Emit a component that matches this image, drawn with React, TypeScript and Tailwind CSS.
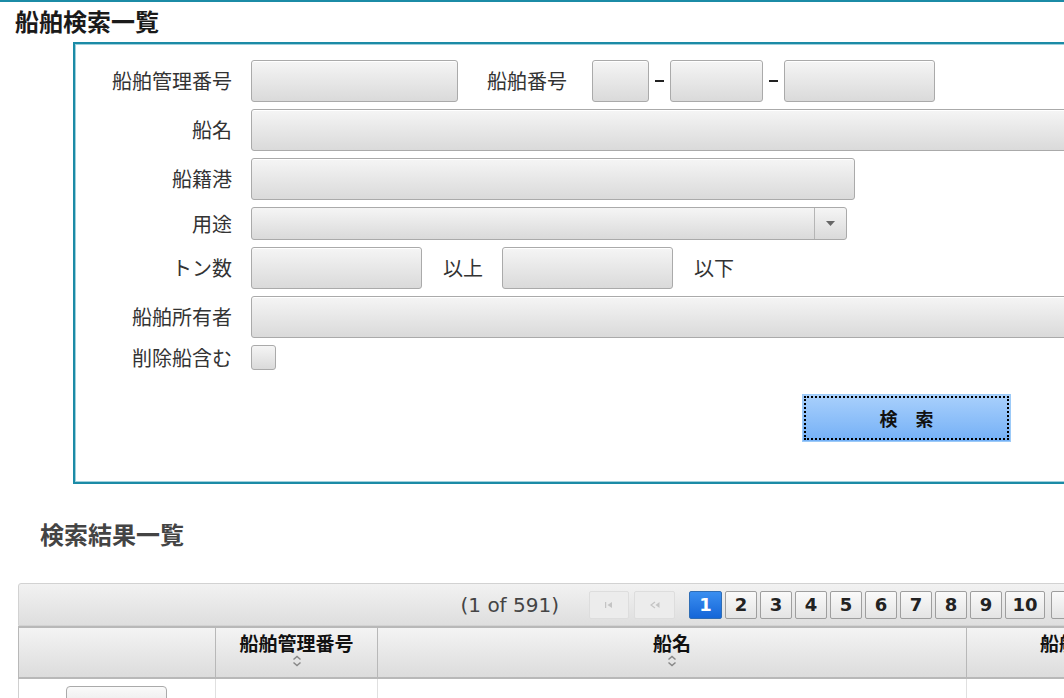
import React from 'react';

const jp = "font-['Noto_Sans_CJK_JP',sans-serif]";
const inputCls =
  'h-[42px] rounded-[3px] border border-[#aaaaaa] bg-gradient-to-b from-[#f5f5f5] to-[#dadada] shadow-[inset_0_1px_0_#ffffff]';

function Label({ children }: { children: React.ReactNode }) {
  return (
    <div className="w-[157px] shrink-0 text-right text-[20px] leading-[24px] text-[#333333]">
      {children}
    </div>
  );
}

function Dash() {
  return (
    <div className="flex w-[21px] justify-center">
      <div className="h-[2px] w-[9px] bg-[#222222]" />
    </div>
  );
}

// 並び替えアイコン
function SortIcon() {
  return (
    <svg width="10" height="12" viewBox="0 0 10 12" className="mx-auto mt-[1px]">
      <path d="M1.5 4.5 L5 1.5 L8.5 4.5" fill="none" stroke="#888" strokeWidth="1.5" />
      <path d="M1.5 7.5 L5 10.5 L8.5 7.5" fill="none" stroke="#888" strokeWidth="1.5" />
    </svg>
  );
}

function PagerIcon({ kind, color }: { kind: 'first' | 'prev' | 'next' | 'last'; color: string }) {
  return (
    <svg width="12" height="8" viewBox="0 0 12 8">
      {kind === 'first' && (
        <>
          <rect x="2" y="1" width="1.2" height="6" fill={color} />
          <path d="M9 1 L4.5 4 L9 7 Z" fill={color} />
        </>
      )}
      {kind === 'prev' && (
        <>
          <path d="M6 1 L2 4 L6 7" fill="none" stroke={color} strokeWidth="1.2" />
          <path d="M10.5 1 L6.5 4 L10.5 7 Z" fill={color} />
        </>
      )}
      {kind === 'next' && (
        <>
          <path d="M6 1 L10 4 L6 7" fill="none" stroke={color} strokeWidth="1.2" />
          <path d="M1.5 1 L5.5 4 L1.5 7 Z" fill={color} />
        </>
      )}
      {kind === 'last' && (
        <>
          <rect x="8.8" y="1" width="1.2" height="6" fill={color} />
          <path d="M3 1 L7.5 4 L3 7 Z" fill={color} />
        </>
      )}
    </svg>
  );
}

export default function App() {
  const pages = [1, 2, 3, 4, 5, 6, 7, 8, 9, 10];

  return (
    <div className={`h-[698px] w-[1064px] overflow-hidden border-t-2 border-[#1b8ba6] bg-white ${jp}`}>
      <h1 className="pl-[15px] pt-[4px] text-[24px] font-bold leading-[30px] text-[#1a1a1a]">船舶検索一覧</h1>

      {/* 検索条件 */}
      <div className="ml-[73px] mt-[6px] h-[442px] w-[1100px] border-2 border-[#1b8ba6] shadow-[inset_0_0_0_1px_#9fd0dc]">
        <div className="flex flex-col gap-[7px] pt-[16px]">
          <div className="flex items-center">
            <Label>船舶管理番号</Label>
            <div className={`ml-[19px] w-[207px] ${inputCls}`} />
            <div className="ml-[29px] w-[105px] text-[20px] text-[#333333]">船舶番号</div>
            <div className={`w-[57px] ${inputCls}`} />
            <Dash />
            <div className={`w-[93px] ${inputCls}`} />
            <Dash />
            <div className={`w-[151px] ${inputCls}`} />
          </div>
          <div className="flex items-center">
            <Label>船名</Label>
            <div className={`ml-[19px] w-[900px] ${inputCls}`} />
          </div>
          <div className="flex items-center">
            <Label>船籍港</Label>
            <div className={`ml-[19px] w-[604px] ${inputCls}`} />
          </div>
          <div className="flex items-center">
            <Label>用途</Label>
            <div className="ml-[19px] flex h-[33px] w-[596px] rounded-[3px] border border-[#aaaaaa] bg-gradient-to-b from-[#f5f5f5] to-[#dadada]">
              <div className="flex-1" />
              <div className="flex w-[32px] items-center justify-center border-l border-[#b5b5b5]">
                <svg width="9" height="5" viewBox="0 0 9 5">
                  <path d="M0 0 H9 L4.5 5 Z" fill="#666" />
                </svg>
              </div>
            </div>
          </div>
          <div className="flex items-center">
            <Label>トン数</Label>
            <div className={`ml-[19px] w-[171px] ${inputCls}`} />
            <div className="w-[80px] pl-[21px] text-[20px] text-[#333333]">以上</div>
            <div className={`w-[171px] ${inputCls}`} />
            <div className="pl-[21px] text-[20px] text-[#333333]">以下</div>
          </div>
          <div className="flex items-center">
            <Label>船舶所有者</Label>
            <div className={`ml-[19px] w-[900px] ${inputCls}`} />
          </div>
          <div className="flex items-center">
            <Label>削除船含む</Label>
            <div className="ml-[19px] h-[25px] w-[25px] rounded-[3px] border border-[#aaaaaa] bg-gradient-to-b from-[#f5f5f5] to-[#dadada]" />
          </div>
        </div>

        <div className="ml-[727px] mt-[24px] h-[48px] w-[209px] border border-[#9ccaf8] bg-gradient-to-b from-[#a9d0fc] to-[#74b0f6] p-[1px]">
          <div className="flex h-full w-full items-center justify-center border-2 border-dotted border-black text-[18px] font-bold text-[#111]">
            検　索
          </div>
        </div>
      </div>

      {/* 検索結果 */}
      <h2 className="pl-[40px] pt-[35px] text-[24px] font-bold leading-[30px] text-[#444444]">検索結果一覧</h2>

      <div className="ml-[18px] mt-[34px] w-[1200px]">
        <div className="flex h-[43px] items-center rounded-t-[3px] border border-[#d2d2d2] bg-gradient-to-b from-[#f2f2f2] to-[#dedede]">
          <span className="w-[540px] text-right font-['DejaVu_Sans',sans-serif] text-[20px] text-[#444444]">(1 of 591)</span>
          <div className="ml-[30px] flex gap-[5px]">
            <div className="flex h-[28px] w-[40px] items-center justify-center rounded-[2px] border border-[#dddddd] bg-[#ececec]">
              <PagerIcon kind="first" color="#c4c4c4" />
            </div>
            <div className="flex h-[28px] w-[41px] items-center justify-center rounded-[2px] border border-[#dddddd] bg-[#ececec]">
              <PagerIcon kind="prev" color="#c4c4c4" />
            </div>
          </div>
          <div className="ml-[14px] flex gap-[3px] font-['DejaVu_Sans',sans-serif] text-[18px] font-bold">
            {pages.map((p) => (
              <div
                key={p}
                className={
                  p === 1
                    ? 'flex h-[28px] w-[33px] items-center justify-center rounded-[2px] border border-[#2f6db5] bg-gradient-to-b from-[#3a8ef0] to-[#1466d8] text-white'
                    : p >= 10
                      ? 'flex h-[28px] w-[40px] items-center justify-center rounded-[2px] border border-[#9e9e9e] bg-gradient-to-b from-[#fafafa] to-[#e4e4e4] text-[#222]'
                      : 'flex h-[28px] w-[32px] items-center justify-center rounded-[2px] border border-[#9e9e9e] bg-gradient-to-b from-[#fafafa] to-[#e4e4e4] text-[#222]'
                }
              >
                {p}
              </div>
            ))}
          </div>
          <div className="ml-[6px] flex gap-[5px]">
            <div className="flex h-[28px] w-[40px] items-center justify-center rounded-[2px] border border-[#9e9e9e] bg-gradient-to-b from-[#fafafa] to-[#e4e4e4]">
              <PagerIcon kind="next" color="#555" />
            </div>
            <div className="flex h-[28px] w-[40px] items-center justify-center rounded-[2px] border border-[#9e9e9e] bg-gradient-to-b from-[#fafafa] to-[#e4e4e4]">
              <PagerIcon kind="last" color="#555" />
            </div>
          </div>
        </div>

        <div className="flex h-[53px] border-y-2 border-x border-[#b8b8b8] bg-gradient-to-b from-[#f4f4f4] to-[#dcdcdc] text-[19px] font-bold text-[#111]">
          <div className="w-[197px] border-r border-[#b8b8b8]" />
          <div className="w-[162px] border-r border-[#b8b8b8] pt-[4px] text-center leading-[22px]">
            船舶管理番号
            <SortIcon />
          </div>
          <div className="w-[589px] border-r border-[#b8b8b8] pt-[4px] text-center leading-[22px]">
            船名
            <SortIcon />
          </div>
          <div className="flex-1 pt-[4px] pl-[73px] leading-[22px]">船舶番号</div>
        </div>

        <div className="flex h-[40px] border-x border-[#d0d0d0]">
          <div className="w-[197px] border-r border-[#e0e0e0] pl-[47px] pt-[7px]">
            <div className="h-[30px] w-[101px] rounded-[4px] border border-[#aaaaaa] bg-gradient-to-b from-[#fafafa] to-[#e2e2e2]" />
          </div>
          <div className="w-[162px] border-r border-[#e0e0e0]" />
          <div className="w-[589px] border-r border-[#e0e0e0]" />
          <div className="flex-1" />
        </div>
      </div>
    </div>
  );
}
